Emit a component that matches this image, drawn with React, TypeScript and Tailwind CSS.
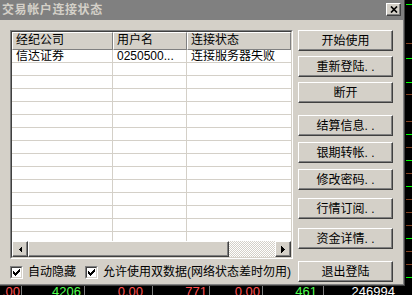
import * as React from 'react';

const raised =
  'bg-[#d4d0c8] border border-t-white border-l-white border-r-[#404040] border-b-[#404040] shadow-[inset_-1px_-1px_0_#808080]';

const buttons = [
  { label: '开始使用', gap: 'mt-0' },
  { label: '重新登陆. .', gap: 'mt-[5px]' },
  { label: '断开', gap: 'mt-[5px]' },
  { label: '结算信息. .', gap: 'mt-[12px]' },
  { label: '银期转帐. .', gap: 'mt-[6px]' },
  { label: '修改密码. .', gap: 'mt-[6px]' },
  { label: '行情订阅. .', gap: 'mt-[8px]' },
  { label: '资金详情. .', gap: 'mt-[9px]' },
  { label: '退出登陆', gap: 'mt-[12px]' },
];

const rows = [
  ['信达证券', '0250500...', '连接服务器失败'],
  ...Array.from({ length: 14 }, () => ['', '', '']),
];

const ticks = [
  { y: 4, c: '#00ff00' }, { y: 43, c: '#804020' }, { y: 58, c: '#00ff00' },
  { y: 82, c: '#00ff00' }, { y: 94, c: '#804020' }, { y: 121, c: '#804020' },
  { y: 134, c: '#00ff00' }, { y: 147, c: '#804020' }, { y: 160, c: '#00ff00' },
  { y: 173, c: '#804020' }, { y: 186, c: '#00ff00' }, { y: 199, c: '#804020' },
  { y: 212, c: '#804020' }, { y: 225, c: '#804020' }, { y: 238, c: '#00ff00' },
  { y: 251, c: '#804020' }, { y: 264, c: '#804020' }, { y: 277, c: '#00ff00' },
];

const quotes = [
  { text: '.00', w: 'w-[21px] pr-[1px]', color: 'text-[#ff5050]' },
  { text: '4206', w: 'w-[62px] pr-[3px]', color: 'text-[#50ff50]' },
  { text: '0.00', w: 'w-[67px] pr-[9px]', color: 'text-[#ff5050]' },
  { text: '771', w: 'w-[56px] pr-[2px]', color: 'text-[#ff5050]' },
  { text: '0.00', w: 'w-[52px] pr-[2px]', color: 'text-[#ff5050]' },
  { text: '461', w: 'w-[60px] pr-[6px]', color: 'text-[#50ff50]' },
  { text: '246994', w: 'flex-1 pr-[17px]', color: 'text-white' },
];

const CheckMark = () => (
  <svg width="7" height="7" viewBox="0 0 7 7" shapeRendering="crispEdges">
    <path
      d="M0 2h1v3h-1zM1 3h1v3h-1zM2 4h1v3h-1zM3 3h1v3h-1zM4 2h1v3h-1zM5 1h1v3h-1zM6 0h1v3h-1z"
      fill="#000"
    />
  </svg>
);

const CheckBox = () => (
  <div className="w-[13px] h-[13px] border border-t-[#808080] border-l-[#808080] border-r-white border-b-white">
    <div className="w-full h-full bg-white border border-t-[#404040] border-l-[#404040] border-r-[#d4d0c8] border-b-[#d4d0c8] flex items-center justify-center">
      <CheckMark />
    </div>
  </div>
);

const Arrow = ({ dir }: { dir: 'left' | 'right' }) => (
  <div className={`w-[16px] h-[16px] flex items-center justify-center ${raised}`}>
    <svg width="4" height="7" viewBox="0 0 4 7" shapeRendering="crispEdges">
      <path d={dir === 'left' ? 'M4 0v7L0.5 3.5z' : 'M0 0v7L3.5 3.5z'} fill="#000" />
    </svg>
  </div>
);

export default function App() {
  return (
    <div className="w-[412px] h-[295px] overflow-hidden bg-black flex flex-col font-[Liberation_Sans,Noto_Sans_CJK_SC,sans-serif] text-[12px] text-black">
      <div className="flex h-[286px] shrink-0">
        {/* dialog window */}
        <div className="w-[405px] h-full bg-[#d4d0c8] border-r border-b border-r-[#404040] border-b-[#404040] shadow-[inset_-1px_-1px_0_#808080] flex flex-col">
          <div className="h-[20px] bg-[#808080] flex justify-between shrink-0">
            <span className="pl-[2px] leading-[20px] font-bold tracking-[0.6px] text-[#d4d0c8]">
              交易帐户连接状态
            </span>
            <div className={`mt-[3px] mr-[3px] w-[15px] h-[13px] flex items-center justify-center ${raised}`}>
              <svg width="8" height="7" viewBox="0 0 8 7">
                <path d="M1 0.5L7 6.5M7 0.5L1 6.5" stroke="#000" strokeWidth="1.7" />
              </svg>
            </div>
          </div>

          <div className="flex pl-[10px] pt-[10px]">
            <div className="w-[283px] flex flex-col">
              {/* list view */}
              <div className="h-[229px] border border-t-[#808080] border-l-[#808080] border-r-white border-b-white">
                <div className="h-full flex flex-col bg-white border border-t-[#404040] border-l-[#404040] border-r-[#d4d0c8] border-b-[#d4d0c8]">
                  <div className="h-[18px] flex shrink-0">
                    <div className="w-[101px] h-full pl-[3px] leading-[15px] bg-[#d4d0c8] border border-t-white border-l-white border-r-[#808080] border-b-[#808080]">
                      经纪公司
                    </div>
                    <div className="w-[74px] h-full pl-[3px] leading-[15px] bg-[#d4d0c8] border border-t-white border-l-white border-r-[#808080] border-b-[#808080]">
                      用户名
                    </div>
                    <div className="flex-1 h-full pl-[3px] leading-[15px] bg-[#d4d0c8] border border-t-white border-l-white border-r-[#808080] border-b-[#808080]">
                      连接状态
                    </div>
                  </div>
                  <div className="flex-1 overflow-hidden">
                    {rows.map((r, i) => (
                      <div key={i} className="h-[13px] flex border-b border-[#d4d0c8] leading-[12px]">
                        <div className="w-[101px] pl-[4px] border-r border-[#d4d0c8] whitespace-nowrap">{r[0]}</div>
                        <div className="w-[74px] pl-[4px] border-r border-[#d4d0c8] whitespace-nowrap">{r[1]}</div>
                        <div className="flex-1 pl-[4px] whitespace-nowrap overflow-hidden">{r[2]}</div>
                      </div>
                    ))}
                  </div>
                  <div className="h-[16px] flex shrink-0 bg-[#d4d0c8]">
                    <Arrow dir="left" />
                    <div className={`w-[201px] h-full ${raised}`} />
                    <div className="flex-1 h-full bg-[image:repeating-conic-gradient(#d4d0c8_0_25%,#ffffff_0_50%)] bg-size-[2px_2px]" />
                    <Arrow dir="right" />
                  </div>
                </div>
              </div>

              <div className="mt-[7px] flex items-center h-[13px]">
                <CheckBox />
                <span className="ml-[5px] leading-[13px] whitespace-nowrap">自动隐藏</span>
                <div className="ml-[9px]">
                  <CheckBox />
                </div>
                <span className="ml-[5px] leading-[13px] whitespace-nowrap">允许使用双数据(网络状态差时勿用)</span>
              </div>
            </div>

            <div className="ml-[5px] w-[95px] flex flex-col">
              {buttons.map((b) => (
                <div
                  key={b.label}
                  className={`${b.gap} h-[21px] flex items-center justify-center leading-[12px] whitespace-pre ${raised}`}
                >
                  {b.label}
                </div>
              ))}
            </div>
          </div>
        </div>

        {/* chart axis behind the dialog */}
        <svg width="7" height="286" className="shrink-0">
          {ticks.map((t) => (
            <line key={t.y} x1="1" x2="7" y1={t.y + 0.5} y2={t.y + 0.5} stroke={t.c} strokeWidth="1" />
          ))}
        </svg>
      </div>

      <div className="h-[9px] flex overflow-hidden font-[Liberation_Sans,sans-serif] text-[13px] leading-[11px]">
        {quotes.map((q, i) => (
          <React.Fragment key={i}>
            {i > 0 && <div className="w-px h-full bg-[#808080] shrink-0" />}
            <div className={`${q.w} text-right ${q.color} shrink-0`}>{q.text}</div>
          </React.Fragment>
        ))}
      </div>
    </div>
  );
}
